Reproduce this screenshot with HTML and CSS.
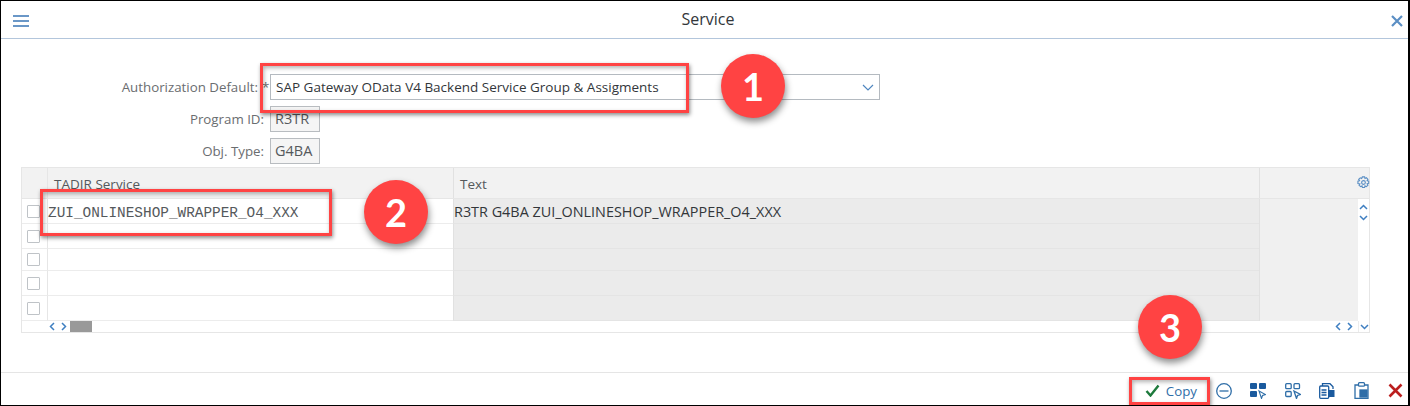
FILE: index.html
```html
<!DOCTYPE html>
<html>
<head>
  <title>Service</title>
  <link rel="stylesheet" href="styles.css">
</head>
<body>
  <div class="window">
    <div class="title-bar">
      <svg class="menu-icon" width="16" height="12" viewBox="0 0 16 12"><path d="M0 1h16M0 6h16M0 11h16"/></svg>
      <span class="title">Service</span>
      <svg class="close-icon" width="12" height="12" viewBox="0 0 12 12"><path d="M1 1l10 10M11 1L1 11"/></svg>
    </div>

    <div class="content">
      <div class="form-row form-row-first">
        <label class="form-label">Authorization Default:</label>
        <span class="required">*</span>
        <div class="select-box">
          <span>SAP Gateway OData V4 Backend Service Group &amp; Assigments</span>
          <svg class="chevron" width="12" height="7" viewBox="0 0 12 7"><path d="M1 1l5 5 5-5"/></svg>
        </div>
      </div>
      <div class="form-row">
        <label class="form-label">Program ID:</label>
        <div class="value-box">R3TR</div>
      </div>
      <div class="form-row">
        <label class="form-label">Obj. Type:</label>
        <div class="value-box">G4BA</div>
      </div>

      <div class="table">
        <div class="table-row table-head">
          <div class="cell-check"></div>
          <div class="cell-service">TADIR Service</div>
          <div class="cell-text">Text</div>
          <div class="cell-rest">
            <svg class="gear" width="13" height="13" viewBox="0 0 14 14"><circle cx="7" cy="7" r="2"/><path d="M5.800 1h2.400l.4 1.700 1.500-.8 1.700 1.600-.9 1.500 1.700.5v2.400l-1.700.5.9 1.500-1.700 1.600-1.500-.8-.4 1.700H5.800l-.4-1.700-1.500.8-1.700-1.600.9-1.500L1 8V5.600l1.700-.5-.9-1.500 1.700-1.600 1.500.8z"/></svg>
          </div>
        </div>
        <div class="table-body">
          <div class="table-rows">
            <div class="table-row row-a">
              <div class="cell-check"><span class="checkbox"></span></div>
              <div class="cell-service mono">ZUI_ONLINESHOP_WRAPPER_O4_XXX</div>
              <div class="cell-text">R3TR G4BA ZUI_ONLINESHOP_WRAPPER_O4_XXX</div>
              <div class="cell-rest"></div>
            </div>
            <div class="table-row row-a">
              <div class="cell-check"><span class="checkbox"></span></div>
              <div class="cell-service"></div>
              <div class="cell-text"></div>
              <div class="cell-rest"></div>
            </div>
            <div class="table-row row-b">
              <div class="cell-check"><span class="checkbox"></span></div>
              <div class="cell-service"></div>
              <div class="cell-text"></div>
              <div class="cell-rest"></div>
            </div>
            <div class="table-row row-a">
              <div class="cell-check"><span class="checkbox"></span></div>
              <div class="cell-service"></div>
              <div class="cell-text"></div>
              <div class="cell-rest"></div>
            </div>
            <div class="table-row row-a">
              <div class="cell-check"><span class="checkbox"></span></div>
              <div class="cell-service"></div>
              <div class="cell-text"></div>
              <div class="cell-rest"></div>
            </div>
          </div>
          <div class="v-scroll">
            <svg class="arrow" width="9" height="6" viewBox="0 0 9 6"><path d="M1 5l3.500-3.500L8 5"/></svg>
            <svg class="arrow" width="9" height="6" viewBox="0 0 9 6"><path d="M1 1l3.500 3.500L8 1"/></svg>
          </div>
        </div>
        <div class="h-scroll">
          <div class="h-scroll-left">
            <svg class="arrow" width="6" height="9" viewBox="0 0 6 9"><path d="M5 1L1.500 4.500 5 8"/></svg>
            <svg class="arrow" width="6" height="9" viewBox="0 0 6 9"><path d="M1 1l3.500 3.500L1 8"/></svg>
            <span class="thumb"></span>
          </div>
          <div class="h-scroll-right">
            <svg class="arrow" width="6" height="9" viewBox="0 0 6 9"><path d="M5 1L1.500 4.500 5 8"/></svg>
            <svg class="arrow" width="6" height="9" viewBox="0 0 6 9"><path d="M1 1l3.500 3.500L1 8"/></svg>
          </div>
          <div class="h-scroll-end">
            <svg class="arrow" width="9" height="6" viewBox="0 0 9 6"><path d="M1 1l3.500 3.500L8 1"/></svg>
          </div>
        </div>
      </div>
    </div>

    <div class="footer">
      <button class="copy-btn">
        <svg class="check" width="15" height="13" viewBox="0 0 15 13"><path d="M1.500 7l4 4.500L13.500 1.500"/></svg>
        Copy
      </button>
      <svg class="tool" width="16" height="16" viewBox="0 0 16 16"><circle cx="8" cy="8" r="7.300"/><path d="M3.500 8h9"/></svg>
      <svg class="tool-solid" width="16" height="16" viewBox="0 0 16 16"><rect x="0" y="0" width="7" height="6" rx="1"/><rect x="9" y="0" width="7" height="6" rx="1"/><rect x="0" y="8" width="7" height="6" rx="1"/><path class="cursor" d="M9 8l6.500 3.500-3 1-1 3z"/></svg>
      <svg class="tool" width="16" height="16" viewBox="0 0 16 16"><rect x=".7" y=".7" width="5.500" height="5" rx="1"/><rect x="9" y=".7" width="5.500" height="5" rx="1"/><rect x=".7" y="8.500" width="5.500" height="5" rx="1"/><path d="M9 8l6.500 3.500-3 1-1 3z"/></svg>
      <svg class="tool-solid" width="16" height="16" viewBox="0 0 16 16"><path class="page" d="M3.500 3V.7h7.500l3 3V6"/><rect class="page-fill" x=".7" y="3" width="9" height="12.300" rx="1"/><path class="page-lines" d="M2.500 7h5M2.500 9.500h5M2.500 12h5"/><rect x="9" y="7" width="6.500" height="7"/></svg>
      <svg class="tool" width="16" height="17" viewBox="0 0 16 17"><path d="M4.500 3H1v13.300h13V3h-3.500"/><rect class="fill" x="4.500" y=".7" width="6" height="3.500" rx="1"/><rect class="ink" x="6" y="8" width="7" height="7"/></svg>
      <svg class="cancel" width="15" height="15" viewBox="0 0 15 15"><path d="M1.500 1.500l12 12M13.500 1.500l-12 12"/></svg>
    </div>

    <!-- callouts drawn over the screen -->
    <div class="mark mark-1"></div>
    <div class="mark mark-2"></div>
    <div class="mark mark-3"></div>
    <div class="badge badge-1">1</div>
    <div class="badge badge-2">2</div>
    <div class="badge badge-3">3</div>
  </div>
</body>
</html>
```
FILE: styles.css
```css
* {
  box-sizing: border-box;
}

body {
  margin: 0;
  background: #ffffff;
  font-family: "Open Sans", "Noto Sans", sans-serif;
  font-size: 13.500px;
  color: #32363a;
}

svg {
  display: block;
  fill: none;
}

.window {
  position: relative;
  width: 1410px;
  height: 406px;
  display: flex;
  flex-direction: column;
  border-top: 1px solid #000000;
  border-left: 1px solid #000000;
  border-right: 2px solid #000000;
  border-bottom: 1px solid #000000;
  overflow: hidden;
}

/* title bar */
.title-bar {
  height: 38px;
  flex: none;
  display: flex;
  align-items: center;
  justify-content: space-between;
  padding: 2px 5px 0 12px;
  border-bottom: 1px solid #b3c6dc;
}

.title {
  font-size: 16px;
  color: #32363a;
  margin: -3px 4px 0 0;
}

.menu-icon path {
  stroke: #6a97c7;
  stroke-width: 2;
}

.close-icon path {
  stroke: #5b8fc4;
  stroke-width: 2.200;
}

/* form */
.content {
  flex: 1;
  padding-top: 35px;
}

.form-row {
  display: flex;
  align-items: center;
  height: 26px;
  margin-bottom: 6px;
}

.form-label {
  width: 269px;
  padding-right: 6px;
  font-size: 13.300px;
  text-align: right;
  color: #6a6d70;
}

.form-row-first .form-label {
  width: 259px;
  padding-right: 2px;
}

.required {
  width: 10px;
  padding-left: 2px;
  color: #6a6d70;
}

.select-box {
  width: 610px;
  height: 26px;
  display: flex;
  align-items: center;
  justify-content: space-between;
  padding: 0 5px 0 5px;
  background: #ffffff;
  border: 1px solid #b4bac0;
}

.chevron path {
  stroke: #4f86bf;
  stroke-width: 1.200;
}

.value-box {
  width: 50px;
  height: 26px;
  padding-left: 4px;
  line-height: 24px;
  font-size: 14.500px;
  background: #f5f5f5;
  border: 1px solid #b8bcc0;
  color: #55595c;
}

/* table */
.table {
  margin: -3px 0 0 20px;
  width: 1349px;
  border: 1px solid #e6e6e6;
}

.table-row {
  display: flex;
}

.table-head {
  height: 31px;
  background: #f2f2f2;
  border-bottom: 1px solid #e6e6e6;
}

.cell-check {
  width: 26px;
  flex: none;
  display: flex;
  align-items: center;
  justify-content: center;
  padding-right: 2px;
  border-right: 1px solid #e6e6e6;
  border-bottom: 1px solid #ececec;
}

.cell-service {
  width: 405px;
  flex: none;
  padding: 7px 0 0 6px;
  color: #55595c;
  border-bottom: 1px solid #ececec;
}

.cell-text {
  width: 806px;
  flex: none;
  padding: 3px 0 0 0;
  font-size: 14.400px;
  background: #ebebeb;
  border-left: 1px solid #e1e1e1;
  border-bottom: 1px solid #e4e4e4;
}

.cell-rest {
  flex: 1;
  background: #f0f0f0;
  border-left: 1px solid #e1e1e1;
}

.table-head .cell-check,
.table-head .cell-service {
  border-bottom: 0;
}

.table-head .cell-text {
  font-size: 13.500px;
  background: #f2f2f2;
  border-bottom: 0;
  padding: 7px 0 0 6px;
  color: #55595c;
}

.table-head .cell-rest {
  background: #f2f2f2;
  display: flex;
  justify-content: flex-end;
  align-items: center;
}

.gear {
  margin: -2px -1px 0 0;
}

.gear circle,
.gear path {
  stroke: #5b8fc4;
  stroke-width: 1.200;
}

.table-body {
  display: flex;
}

.table-rows {
  flex: 1;
}

.row-a {
  height: 25px;
}

.row-b {
  height: 22px;
}

.mono {
  font-family: "Liberation Mono", monospace;
  font-size: 14.400px;
  padding: 6px 0 0 0;
  color: #55595c;
}

.checkbox {
  width: 13px;
  height: 13px;
  background: #ffffff;
  border: 1px solid #bfc3c7;
  border-radius: 1px;
}

.v-scroll {
  width: 11px;
  flex: none;
  display: flex;
  flex-direction: column;
  align-items: center;
  gap: 5px;
  padding-top: 5px;
  background: #ffffff;
}

.arrow path {
  stroke: #3f7fc1;
  stroke-width: 1.500;
}

.h-scroll {
  height: 11px;
  display: flex;
  align-items: center;
  background: #ffffff;
}

.h-scroll-left {
  display: flex;
  align-items: center;
  gap: 6px;
  padding-left: 27px;
  flex: 1;
}

.thumb {
  width: 22px;
  height: 11px;
  background: #999999;
  margin-left: -3px;
}

.h-scroll-right {
  display: flex;
  gap: 6px;
  padding-right: 5px;
}

.h-scroll-end {
  width: 11px;
  height: 11px;
  display: flex;
  align-items: center;
  justify-content: center;
  border-left: 1px solid #ececec;
}

/* footer */
.footer {
  height: 33px;
  flex: none;
  display: flex;
  align-items: center;
  justify-content: flex-end;
  gap: 18.500px;
  padding: 3px 5px 0 0;
  border-top: 1px solid #e5e5e5;
}

.copy-btn {
  display: flex;
  align-items: center;
  gap: 6px;
  border: 0;
  padding: 0;
  background: none;
  font-family: inherit;
  font-size: 13.300px;
  font-weight: 500;
  color: #2f6ea8;
}

.check path {
  stroke: #1d7a3c;
  stroke-width: 2.400;
}

.tool circle,
.tool rect,
.tool path {
  stroke: #2f6ea8;
  stroke-width: 1.300;
}

.tool .fill {
  fill: #ffffff;
}

.tool .ink {
  fill: #2f6ea8;
}

.tool-solid rect {
  fill: #1a5a9e;
}

.tool-solid .cursor {
  stroke: #2f6ea8;
  stroke-width: 1.100;
}

.tool-solid .page {
  stroke: #1a5a9e;
  stroke-width: 1.300;
}

.tool-solid .page-fill {
  fill: #ffffff;
  stroke: #1a5a9e;
  stroke-width: 1.300;
}

.tool-solid .page-lines {
  stroke: #1a5a9e;
  stroke-width: 1.300;
}

.cancel path {
  stroke: #bb1f1f;
  stroke-width: 2.600;
}

/* callouts */
.mark {
  position: absolute;
  border: 3px solid #ff4343;
  box-shadow: 1px 2px 4px rgba(0, 0, 0, 0.45), inset 1px 2px 4px rgba(0, 0, 0, 0.3);
}

.mark-1 {
  left: 259px;
  top: 62px;
  width: 429px;
  height: 50px;
}

.mark-2 {
  left: 39px;
  top: 188px;
  width: 292px;
  height: 47px;
}

.mark-3 {
  left: 1128px;
  top: 376px;
  width: 81px;
  height: 28px;
}

.badge {
  position: absolute;
  width: 64px;
  height: 64px;
  border-radius: 50%;
  display: flex;
  align-items: center;
  justify-content: center;
  background: #ff4343;
  color: #ffffff;
  font-family: "Lato", "Open Sans", sans-serif;
  font-size: 38px;
  font-weight: 700;
  box-shadow: 1px 4px 7px rgba(0, 0, 0, 0.45);
}

.badge-1 {
  left: 720px;
  top: 53px;
}

.badge-2 {
  left: 363px;
  top: 179px;
}

.badge-3 {
  left: 1137px;
  top: 294px;
}
```
